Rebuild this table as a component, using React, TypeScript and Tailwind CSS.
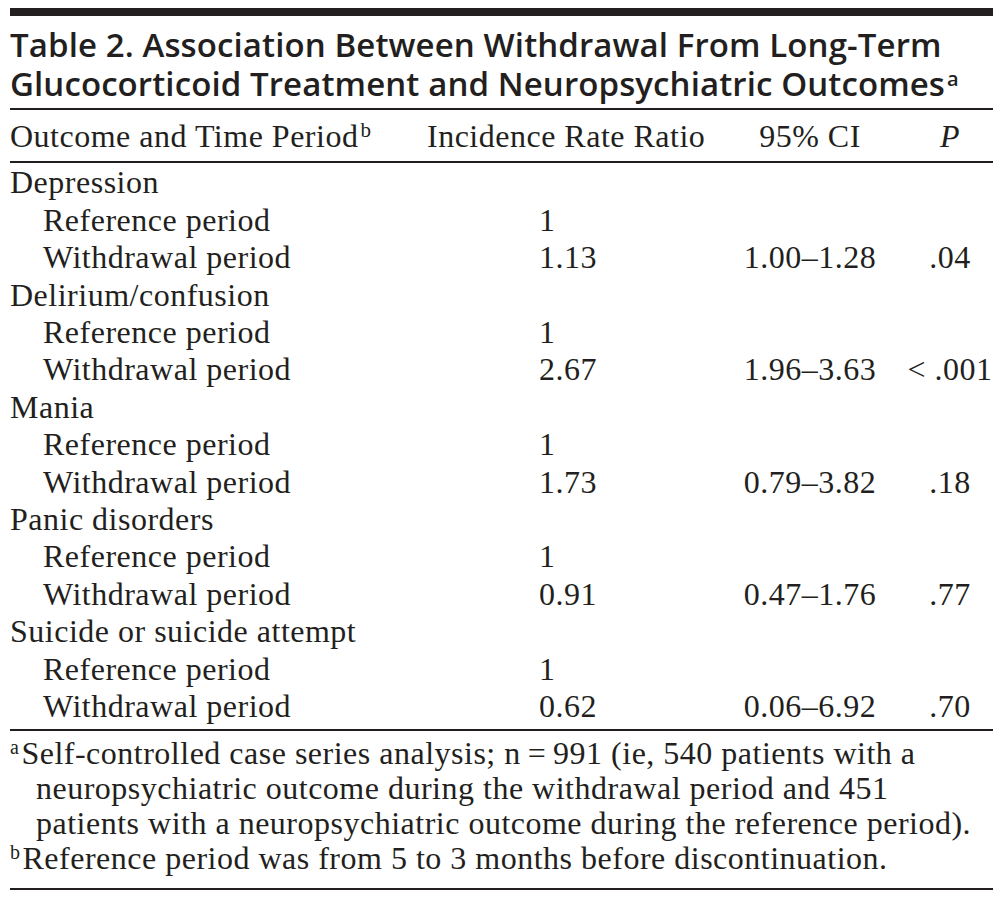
import React from 'react';

const rows = [
  { name: 'Depression', irr: '1.13', ci: '1.00–1.28', p: '.04' },
  { name: 'Delirium/confusion', irr: '2.67', ci: '1.96–3.63', p: '< .001' },
  { name: 'Mania', irr: '1.73', ci: '0.79–3.82', p: '.18' },
  { name: 'Panic disorders', irr: '0.91', ci: '0.47–1.76', p: '.77' },
  { name: 'Suicide or suicide attempt', irr: '0.62', ci: '0.06–6.92', p: '.70' },
];

const gridCols = 'grid grid-cols-[417px_286px_194px_86px]';

function Row({ label, indent, irr, ci, p }: { label: string; indent?: boolean; irr?: string; ci?: string; p?: string }) {
  return (
    <div className={`${gridCols} leading-[37.4px]`}>
      <div className={indent ? 'pl-[33px]' : ''}>{label}</div>
      <div className="pl-[112px]">{irr}</div>
      <div className="text-center">{ci}</div>
      <div className="text-center">{p}</div>
    </div>
  );
}

export default function App() {
  return (
    <div className="w-[1000px] h-[902px] bg-white text-[#231f20]">
      <div className="ml-[10px] w-[983px] pt-[8px]">
        {/* heavy top rule */}
        <div className="h-[8px] bg-[#231f20]"></div>

        {/* Title */}
        <h1 className="mt-[9px] font-['Open_Sans',sans-serif] font-semibold text-[33px] leading-[39px] tracking-[0.1px] whitespace-nowrap">
          Table 2. Association Between Withdrawal From Long-Term
          <br />
          Glucocorticoid Treatment and Neuropsychiatric Outcomes
          <sup className="text-[20px] ml-[2px]">a</sup>
        </h1>

        <div className="mt-[5px] h-[2px] bg-[#231f20]"></div>

        <div className="font-['Liberation_Serif',serif] text-[32px] tracking-[0.5px]">
          {/* Header */}
          <div className={`${gridCols} leading-[37.4px] mt-[8px] pb-[6px]`}>
            <div>
              Outcome and Time Period<sup className="text-[21px] ml-[2px]">b</sup>
            </div>
            <div>Incidence Rate Ratio</div>
            <div className="text-center">95% CI</div>
            <div className="text-center italic">P</div>
          </div>
          <div className="h-[2px] bg-[#231f20]"></div>

          {/* Body */}
          <div className="pt-[1px] pb-[3px]">
            {rows.map((r) => (
              <React.Fragment key={r.name}>
                <Row label={r.name} />
                <Row label="Reference period" indent irr="1" />
                <Row label="Withdrawal period" indent irr={r.irr} ci={r.ci} p={r.p} />
              </React.Fragment>
            ))}
          </div>
          <div className="h-[2px] bg-[#231f20]"></div>

          {/* Footnotes */}
          <div className="pt-[5px] pb-[12px] leading-[35px] whitespace-nowrap">
            <p className="pl-[26px] indent-[-26px]">
              <sup className="text-[20px] mr-[2px]">a</sup>Self-controlled case series analysis; n{'\u2009=\u2009'}991 (ie, 540 patients with a
              <br />
              neuropsychiatric outcome during the withdrawal period and 451
              <br />
              patients with a neuropsychiatric outcome during the reference period).
            </p>
            <p>
              <sup className="text-[20px] mr-[2px]">b</sup>Reference period was from 5 to 3 months before discontinuation.
            </p>
          </div>
          <div className="h-[2px] bg-[#231f20]"></div>
        </div>
      </div>
    </div>
  );
}
